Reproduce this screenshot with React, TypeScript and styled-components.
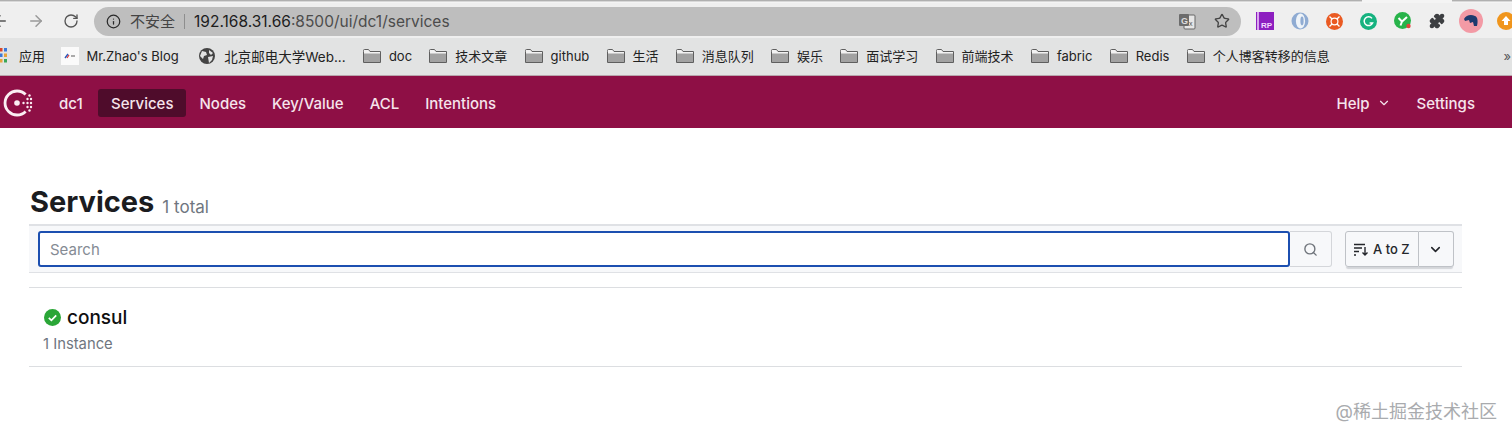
import * as React from 'react';
import styled, { createGlobalStyle } from 'styled-components';
import { ArrowLeft, ArrowRight, RotateCw, Info, Star, ChevronDown, Search, Puzzle } from 'lucide-react';

const FONT = 'Inter, "Noto Sans CJK SC", "Liberation Sans", sans-serif';

const GlobalStyle = createGlobalStyle`
  html, body {
    margin: 0;
    padding: 0;
    background: #fff;
    overflow: hidden;
  }
  body {
    font-family: ${FONT};
  }
  * {
    box-sizing: border-box;
  }
`;

const Page = styled.div`
  position: relative;
  width: 1512px;
  height: 437px;
  overflow: hidden;
`;

const TabEdge = styled.div`
  display: flex;
  height: 3px;
  background: #f4f4f4;
`;

const TabLine = styled.div<{ $w?: number }>`
  height: 2px;
  border-top: 1px solid #b0b0b0;
  background: #d8d8d8;
  flex: ${(p) => (p.$w ? `0 0 ${p.$w}px` : '1')};
  margin-left: ${(p) => (p.$w ? '90px' : '0')};
`;

const Toolbar = styled.div`
  display: flex;
  align-items: center;
  height: 35px;
  padding-top: 1px;
  background: #efefef;
`;

const NavIcons = styled.div`
  display: flex;
  align-items: center;
  margin-left: -9px;
  flex: 0 0 103px;
  gap: 18px;
  color: #555;
`;

const Omnibox = styled.div`
  display: flex;
  align-items: center;
  flex: 0 0 1147px;
  height: 29px;
  padding: 0 11px 0 12px;
  border-radius: 15px;
  background: #bebebe;
  font-size: 15.5px;
  color: #2a2a2a;
`;

const Insecure = styled.span`
  margin-left: 9px;
  padding-right: 9px;
  font-size: 15px;
  color: #444;
  border-right: 1px solid #8e8e8e;
  line-height: 15px;
`;

const Host = styled.span`
  margin-left: 9px;
  color: #1d1d1d;
`;

const UrlRest = styled.span`
  color: #4c4c4c;
`;

const OmniRight = styled.div`
  display: flex;
  align-items: center;
  gap: 18px;
  margin-left: auto;
  color: #444;
`;

const Extensions = styled.div`
  display: flex;
  align-items: center;
  gap: 17px;
  margin-left: 15px;
`;

const ExtensionTail = styled.div`
  display: flex;
  align-items: center;
  gap: 14px;
  margin-left: -3px;
`;

const Bookmarks = styled.div`
  display: flex;
  align-items: center;
  height: 38px;
  padding-bottom: 2px;
  background: #e2e3e3;
  border-bottom: 1px solid #b8a5ac;
  font-size: 13px;
  color: #222;
`;

const Bookmark = styled.div<{ $gap?: number; $inner?: number }>`
  display: flex;
  align-items: center;
  gap: ${(p) => p.$inner ?? 8}px;
  margin-left: ${(p) => p.$gap ?? 17.25}px;
  white-space: nowrap;
`;

const WideLabel = styled.span`
  font-size: 13.5px;
`;

const Overflow = styled.span`
  margin-left: auto;
  margin-right: 1px;
  font-size: 13px;
  color: #555;
`;

const Header = styled.header`
  display: flex;
  align-items: center;
  height: 52px;
  padding: 2px 24px 0 3px;
  background: #8e0f45;
  color: #f6e4ec;
  font-size: 15px;
  font-weight: 500;
`;

const Logo = styled.div`
  display: flex;
  flex: 0 0 56px;
`;

const Dc = styled.span`
  width: 39px;
`;

const NavLink = styled.a<{ $active?: boolean }>`
  display: flex;
  align-items: center;
  height: 28px;
  padding: 0 13px;
  border-radius: 3px;
  background: ${(p) => (p.$active ? '#4f0c2b' : 'transparent')};
`;

const HeaderRight = styled.div`
  display: flex;
  align-items: center;
  margin-left: auto;
`;

const HelpLink = styled.span`
  display: flex;
  align-items: center;
  gap: 7px;
  margin-right: 13px;
`;

const Main = styled.main`
  padding: 0 50px 0 29px;
`;

const TitleRow = styled.div`
  display: flex;
  align-items: flex-end;
  height: 96px;
  padding: 56px 0 4px 1px;
`;

const Title = styled.h1`
  margin: 0;
  font-size: 29px;
  line-height: 36px;
  font-weight: 700;
  color: #1b1c1f;
`;

const Total = styled.span`
  margin: 0 0 1px 8px;
  font-size: 17px;
  line-height: 24px;
  color: #6f7680;
`;

const FilterBar = styled.div`
  display: flex;
  align-items: center;
  height: 49px;
  padding: 0 8px 0 9px;
  background: #f7f8fa;
  border-top: 2px solid #dfe1e5;
  border-bottom: 1px solid #dfe1e5;
`;

const SearchInput = styled.div`
  display: flex;
  align-items: center;
  flex: 1;
  height: 36px;
  padding-left: 10px;
  border: 2px solid #1c4fb0;
  border-radius: 3px;
  background: #fff;
  font-size: 15px;
  color: #858b94;
`;

const SearchButton = styled.div`
  display: flex;
  align-items: center;
  justify-content: center;
  width: 42px;
  height: 36px;
  border: 1px solid #d4d6da;
  border-left: 0;
  border-radius: 0 3px 3px 0;
  color: #6f747b;
`;

const SortGroup = styled.div`
  display: flex;
  height: 36px;
  margin-left: 13px;
  border-radius: 3px;
  box-shadow: 0 3px 1px -1px #d3d5d9;
`;

const SortButton = styled.div`
  display: flex;
  align-items: center;
  gap: 4px;
  width: 74px;
  padding-left: 8px;
  border: 1px solid #bfc2c7;
  border-radius: 3px 0 0 3px;
  background: #f7f8fa;
  font-size: 13px;
  font-weight: 500;
  color: #24262b;
`;

const SortMenu = styled.div`
  display: flex;
  align-items: center;
  justify-content: center;
  width: 35px;
  padding-right: 2px;
  border: 1px solid #bfc2c7;
  border-left: 0;
  border-radius: 0 3px 3px 0;
  background: #f7f8fa;
  color: #24262b;
`;

const ServiceRow = styled.div`
  height: 80px;
  margin-top: 14px;
  padding: 19px 0 0 14px;
  border-top: 1px solid #dcdee1;
  border-bottom: 1px solid #dcdee1;
`;

const ServiceName = styled.div`
  display: flex;
  align-items: center;
  gap: 6px;
  height: 20px;
  margin-left: 1px;
  font-size: 19px;
  font-weight: 500;
  color: #0f0f10;
`;

const ServiceMeta = styled.div`
  margin-top: 7.5px;
  font-size: 14.8px;
  color: #6f7680;
`;

const Watermark = styled.div`
  position: absolute;
  right: 15px;
  top: 400px;
  font-size: 18px;
  line-height: 24px;
  color: #a9abae;
`;

const Folder = () => (
  <svg width="18" height="14" viewBox="0 0 18 14">
    <path d="M.5 2.5V1.5a1 1 0 0 1 1-1h4l1.5 2h10.5v11H.5z" fill="#f2f2f2" stroke="#5f5f5f" />
    <rect x="1" y="4.5" width="16" height="8.5" fill="#a2a2a2" />
  </svg>
);

const Apps = () => (
  <svg width="8" height="16" viewBox="0 0 8 16">
    {[0, 5.5, 11].map((y, i) =>
      [0, 5].map((x, j) => (
        <rect key={`${i}${j}`} x={x} y={y} width="3.5" height="3.5" fill={['#d9472b', '#3b78d8', '#e8a33a', '#3aa757'][(i + j) % 4]} />
      )),
    )}
  </svg>
);

const BlogIcon = () => (
  <svg width="18" height="18" viewBox="0 0 18 18">
    <rect width="18" height="18" fill="#fafafa" />
    <path d="M4 11l3-4" stroke="#2b57b8" strokeWidth="1.4" />
    <path d="M6 11l2-3" stroke="#d33" strokeWidth="1.2" />
    <rect x="10" y="8" width="4" height="2" fill="#aaa" />
  </svg>
);

const Globe = () => (
  <svg width="16" height="16" viewBox="0 0 16 16">
    <circle cx="8" cy="8" r="8" fill="#444" />
    <path d="M3 3l4 1 1 3-3 1-1 3-3-3zM10 2l4 3-2 2-2-2zM9 9l5-1-1 4-3 3z" fill="#e2e3e3" />
  </svg>
);

const TranslateIcon = () => (
  <svg width="18" height="17" viewBox="0 0 18 17">
    <rect x="6" y="2" width="11" height="14" rx="1" fill="#e6e6e6" stroke="#666" />
    <rect x="1" y="1" width="10" height="12" rx="1" fill="#6c6c6c" />
    <text x="3" y="10.5" fontSize="9" fontWeight="700" fill="#ddd" fontFamily="Liberation Sans">G</text>
    <text x="11" y="13" fontSize="7" fill="#555" fontFamily="Liberation Sans">x</text>
  </svg>
);

const AxureIcon = () => (
  <svg width="18" height="18" viewBox="0 0 18 18">
    <rect width="18" height="18" fill="#8d1fc0" />
    <rect x="1" width="2" height="18" fill="#d9a6ee" />
    <text x="5" y="16" fontSize="8" fontWeight="700" fill="#f3d8ff" fontFamily="Liberation Sans">RP</text>
  </svg>
);

const RingIcon = () => (
  <svg width="18" height="18" viewBox="0 0 18 18">
    <circle cx="9" cy="9" r="8.5" fill="#8fabd2" />
    <ellipse cx="9.5" cy="9" rx="4.6" ry="7.4" fill="#eef3f8" />
    <ellipse cx="11" cy="9" rx="1.6" ry="4.4" fill="#8fabd2" />
  </svg>
);

const TargetIcon = () => (
  <svg width="17" height="17" viewBox="0 0 17 17">
    <circle cx="8.5" cy="8.5" r="8.5" fill="#ea5a22" />
    <circle cx="8.5" cy="8.5" r="3.4" fill="none" stroke="#fff" strokeWidth="1.2" />
    <path d="M3.5 3.5l2.5 2.5M13.5 3.5L11 6M3.5 13.5L6 11M13.5 13.5L11 11" stroke="#fff" strokeWidth="1.4" />
  </svg>
);

const GrammarlyIcon = () => (
  <svg width="17" height="17" viewBox="0 0 17 17">
    <circle cx="8.5" cy="8.5" r="8.5" fill="#15b27f" />
    <path d="M12 5.4A4.4 4.4 0 1 0 12.6 10H9.6" fill="none" stroke="#fff" strokeWidth="1.5" />
  </svg>
);

const YIcon = () => (
  <svg width="18" height="18" viewBox="0 0 18 18">
    <circle cx="8.5" cy="8.5" r="8.5" fill="#28b34a" />
    <path d="M4.5 6l3.5 3.5L13 5M8 9.5L6.5 13.5" fill="none" stroke="#fff" strokeWidth="2" />
    <circle cx="14.5" cy="14" r="2.2" fill="#e2453c" />
  </svg>
);

const AvatarIcon = () => (
  <svg width="24" height="24" viewBox="0 0 24 24">
    <circle cx="12" cy="12" r="12" fill="#f39aa5" />
    <path d="M5 10c2-4 7-5 11-3 3 1 3 6 2 10h-3l-1-4-3 1-1-3-4 1z" fill="#1f3a6e" />
  </svg>
);

const UpdateIcon = () => (
  <svg width="18" height="18" viewBox="0 0 18 18">
    <circle cx="9" cy="9" r="9" fill="#f0951c" />
    <path d="M9 4l4.5 5H11v4H7V9H4.5z" fill="#fff" />
  </svg>
);

const ConsulLogo = () => (
  <svg width="32" height="30" viewBox="0 0 32 30">
    <path d="M22.6 6.6A12 12 0 1 0 22.6 23.4" fill="none" stroke="#fbeef3" strokeWidth="2.8" />
    <circle cx="14" cy="15" r="2.8" fill="#fbeef3" />
    {[[20.5, 15], [24.5, 11], [28, 11], [24.5, 15], [28, 15], [24.5, 19], [28, 19], [26.5, 7.5], [26.5, 22.5]].map(([x, y]) => (
      <circle key={`${x}-${y}`} cx={x} cy={y} r="1.2" fill="#fbeef3" />
    ))}
  </svg>
);

const SortIcon = () => (
  <svg width="15" height="14" viewBox="0 0 15 14">
    <path d="M0 2.5h11M0 6h8M0 9.5h5M0 13h2" stroke="#24262b" strokeWidth="1.4" />
    <path d="M11 5v8M8.5 10.5l2.5 2.5 2.5-2.5" fill="none" stroke="#24262b" strokeWidth="1.4" />
  </svg>
);

const HealthIcon = () => (
  <svg width="17" height="17" viewBox="0 0 17 17">
    <circle cx="8.5" cy="8.5" r="8.5" fill="#2aa637" />
    <path d="M4.8 8.8l2.6 2.5 4.8-5" fill="none" stroke="#fff" strokeWidth="1.7" />
  </svg>
);

const folders = ['doc', '技术文章', 'github', '生活', '消息队列', '娱乐', '面试学习', '前端技术', 'fabric', 'Redis', '个人博客转移的信息'];
const navItems = ['Services', 'Nodes', 'Key/Value', 'ACL', 'Intentions'];

const App = () => (
  <Page>
    <GlobalStyle />
    <TabEdge>
      <TabLine />
      <TabLine $w={60} />
    </TabEdge>
    <Toolbar>
      <NavIcons>
        <ArrowLeft size={18} />
        <ArrowRight size={18} color="#9a9a9a" />
        <RotateCw size={16} />
      </NavIcons>
      <Omnibox>
        <Info size={15} />
        <Insecure>不安全</Insecure>
        <Host>192.168.31.66</Host>
        <UrlRest>:8500/ui/dc1/services</UrlRest>
        <OmniRight>
          <TranslateIcon />
          <Star size={16} />
        </OmniRight>
      </Omnibox>
      <Extensions>
        <AxureIcon />
        <RingIcon />
        <TargetIcon />
        <GrammarlyIcon />
        <YIcon />
        <Puzzle size={16} color="#3d3f42" fill="#3d3f42" />
        <ExtensionTail>
          <AvatarIcon />
          <UpdateIcon />
        </ExtensionTail>
      </Extensions>
    </Toolbar>
    <Bookmarks>
      <Bookmark $gap={-1} $inner={12}>
        <Apps />
        <span>应用</span>
      </Bookmark>
      <Bookmark $gap={15.5}>
        <BlogIcon />
        <span>Mr.Zhao's Blog</span>
      </Bookmark>
      <Bookmark $gap={20.5} $inner={9}>
        <Globe />
        <WideLabel>北京邮电大学Web...</WideLabel>
      </Bookmark>
      {folders.map((name) => (
        <Bookmark key={name}>
          <Folder />
          <span>{name}</span>
        </Bookmark>
      ))}
      <Overflow>»</Overflow>
    </Bookmarks>
    <Header>
      <Logo>
        <ConsulLogo />
      </Logo>
      <Dc>dc1</Dc>
      {navItems.map((item) => (
        <NavLink key={item} $active={item === 'Services'}>
          {item}
        </NavLink>
      ))}
      <HeaderRight>
        <HelpLink>
          Help
          <ChevronDown size={14} />
        </HelpLink>
        <NavLink>Settings</NavLink>
      </HeaderRight>
    </Header>
    <Main>
      <TitleRow>
        <Title>Services</Title>
        <Total>1 total</Total>
      </TitleRow>
      <FilterBar>
        <SearchInput>Search</SearchInput>
        <SearchButton>
          <Search size={15} strokeWidth={2.2} />
        </SearchButton>
        <SortGroup>
          <SortButton>
            <SortIcon />A to Z
          </SortButton>
          <SortMenu>
            <ChevronDown size={15} strokeWidth={2.5} />
          </SortMenu>
        </SortGroup>
      </FilterBar>
      <ServiceRow>
        <ServiceName>
          <HealthIcon />
          consul
        </ServiceName>
        <ServiceMeta>1 Instance</ServiceMeta>
      </ServiceRow>
    </Main>
    <Watermark>@稀土掘金技术社区</Watermark>
  </Page>
);

export default App;
